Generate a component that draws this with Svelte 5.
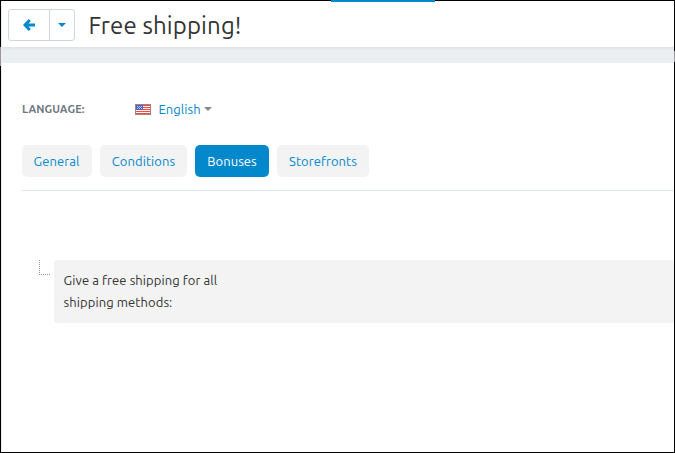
<script>
    let selected = "Bonuses";

    const tabs = ["General", "Conditions", "Bonuses", "Storefronts"];
</script>

<div class="page">
    <span class="progress"></span>
    <span class="edge left"></span>
    <span class="edge right"></span>
    <header>
        <div class="btn-group">
            <button class="back" aria-label="Back">
                <svg width="12" height="12" viewBox="0 0 12 12">
                    <path d="M6.8 1 2 6l4.8 5M2.2 6h9.8" fill="none" stroke="#0388cc" stroke-width="2.9" />
                </svg>
            </button>
            <button class="toggle" aria-label="More"><span class="caret"></span></button>
        </div>
        <h1>Free shipping!</h1>
    </header>
    <div class="band"></div>
    <main>
        <div class="language">
            <span class="label">Language:</span>
            <svg class="flag" width="16" height="11" viewBox="0 0 16 11" shape-rendering="crispEdges">
                <path fill="#fff3f0" d="M0 0h16v11H0z" />
                <path fill="#f34b3e" d="M8 1h7v1H8zM8 3h7v1H8zM8 5h7v1H8zM1 7h14v1H1zM1 9h14v1H1z" />
                <path fill="#4166c0" d="M1 1h7v5H1z" />
                <path fill="#b4c4ed" d="M2 2h1v1H2zM4 2h1v1H4zM6 2h1v1H6zM3 3h1v1H3zM5 3h1v1H5zM2 4h1v1H2zM4 4h1v1H4zM6 4h1v1H6z" />
                <path fill="#a08485" d="M0 0h16v1H0zM0 10h16v1H0zM0 1h1v9H0zM15 1h1v9h-1z" />
            </svg>
            <a href="#english">English</a>
            <span class="caret gray"></span>
        </div>
        <nav>
            {#each tabs as tab}
                <button
                    class="tab {tab.toLowerCase()}"
                    class:active={selected === tab}
                    on:click={() => (selected = tab)}>{tab}</button>
            {/each}
        </nav>
        <div class="bonus">
            <span class="branch"></span>
            <div class="item">
                <p>Give a free shipping for all</p>
                <p>shipping methods:</p>
            </div>
        </div>
    </main>
</div>

<style>
    :global(body) {
        background: #fff;
        overflow: hidden;
    }
    .page {
        position: relative;
        box-sizing: border-box;
        width: 675px;
        height: 453px;
        border: 1px solid #000;
        background: #fff;
        color: #333;
        font-family: Ubuntu, "Noto Sans", "Open Sans", sans-serif;
        font-size: 13px;
    }
    .page::before {
        content: "";
        position: absolute;
        left: 0;
        top: 0;
        width: 1px;
        height: 100%;
        background: #ededed;
    }
    .progress {
        position: absolute;
        left: 330px;
        top: -1px;
        width: 104px;
        height: 2px;
        background: #0388cc;
    }
    .edge {
        position: absolute;
        width: 1px;
        background: #999;
    }
    .edge.left {
        left: -1px;
        top: 46px;
        height: 19px;
    }
    .edge.right {
        right: -1px;
        top: 50px;
        height: 11px;
    }
    header {
        display: flex;
        align-items: flex-start;
        box-sizing: border-box;
        height: 46px;
        padding: 8px 0 0 7px;
    }
    button {
        appearance: none;
        border: none;
        background: transparent;
        padding: 0;
        margin: 0;
        font: inherit;
        cursor: pointer;
    }
    .btn-group {
        display: flex;
        box-sizing: border-box;
        width: 67px;
        height: 32px;
        border: 1px solid #ced8e0;
        border-radius: 3px;
    }
    .btn-group button {
        display: flex;
        align-items: center;
        justify-content: center;
    }
    .back {
        width: 40px;
    }
    .btn-group .toggle {
        box-sizing: border-box;
        width: 25px;
        border-left: 1px solid #ced8e0;
    }
    .caret {
        display: block;
        border: 4px solid transparent;
        border-top-color: #0388cc;
        border-bottom: none;
    }
    h1 {
        margin: 0 0 0 13.5px;
        font-size: 24px;
        font-weight: 400;
        line-height: 33px;
        letter-spacing: 0.13px;
        white-space: nowrap;
    }
    .band {
        height: 16px;
        background: linear-gradient(#dfe2e4, #e5e9eb 2px, #ebeff2 4px);
    }
    main {
        padding-left: 21px;
    }
    .language {
        display: flex;
        align-items: center;
        height: 20px;
        padding-top: 36px;
    }
    .label {
        width: 113px;
        font-size: 11px;
        font-weight: 700;
        text-transform: uppercase;
        color: #6d7780;
        letter-spacing: 0.08px;
    }
    .flag {
        display: block;
    }
    a {
        margin-left: 7.5px;
        color: #0388cc;
        text-decoration: none;
        letter-spacing: 0.06px;
    }
    .caret.gray {
        margin-left: 3px;
        border-top-color: #888;
    }
    nav {
        display: flex;
        gap: 8px;
        height: 45px;
        margin-top: 26px;
        border-bottom: 1px solid #dce6ef;
    }
    .tab {
        height: 32px;
        border-radius: 5px;
        background: #f3f3f3;
        color: #0388cc;
        letter-spacing: 0.06px;
    }
    .tab.active {
        background: #0388cc;
        color: #fff;
    }
    .general {
        width: 70px;
        padding-right: 1px;
    }
    .conditions {
        width: 87px;
    }
    .bonuses {
        width: 74px;
    }
    .storefronts {
        width: 92px;
    }
    .bonus {
        display: flex;
        margin-top: 69px;
        padding-left: 17px;
    }
    .branch {
        box-sizing: border-box;
        width: 11px;
        height: 15px;
        border-left: 1px dotted #999;
        border-bottom: 1px dotted #999;
    }
    .item {
        flex: 1;
        box-sizing: border-box;
        height: 63px;
        margin-left: 4px;
        padding: 9px 9.6px;
        border-radius: 3px 0 0 3px;
        background: #f3f3f3;
        letter-spacing: 0.08px;
    }
    p {
        margin: 0;
        line-height: 22px;
        white-space: nowrap;
    }
</style>
